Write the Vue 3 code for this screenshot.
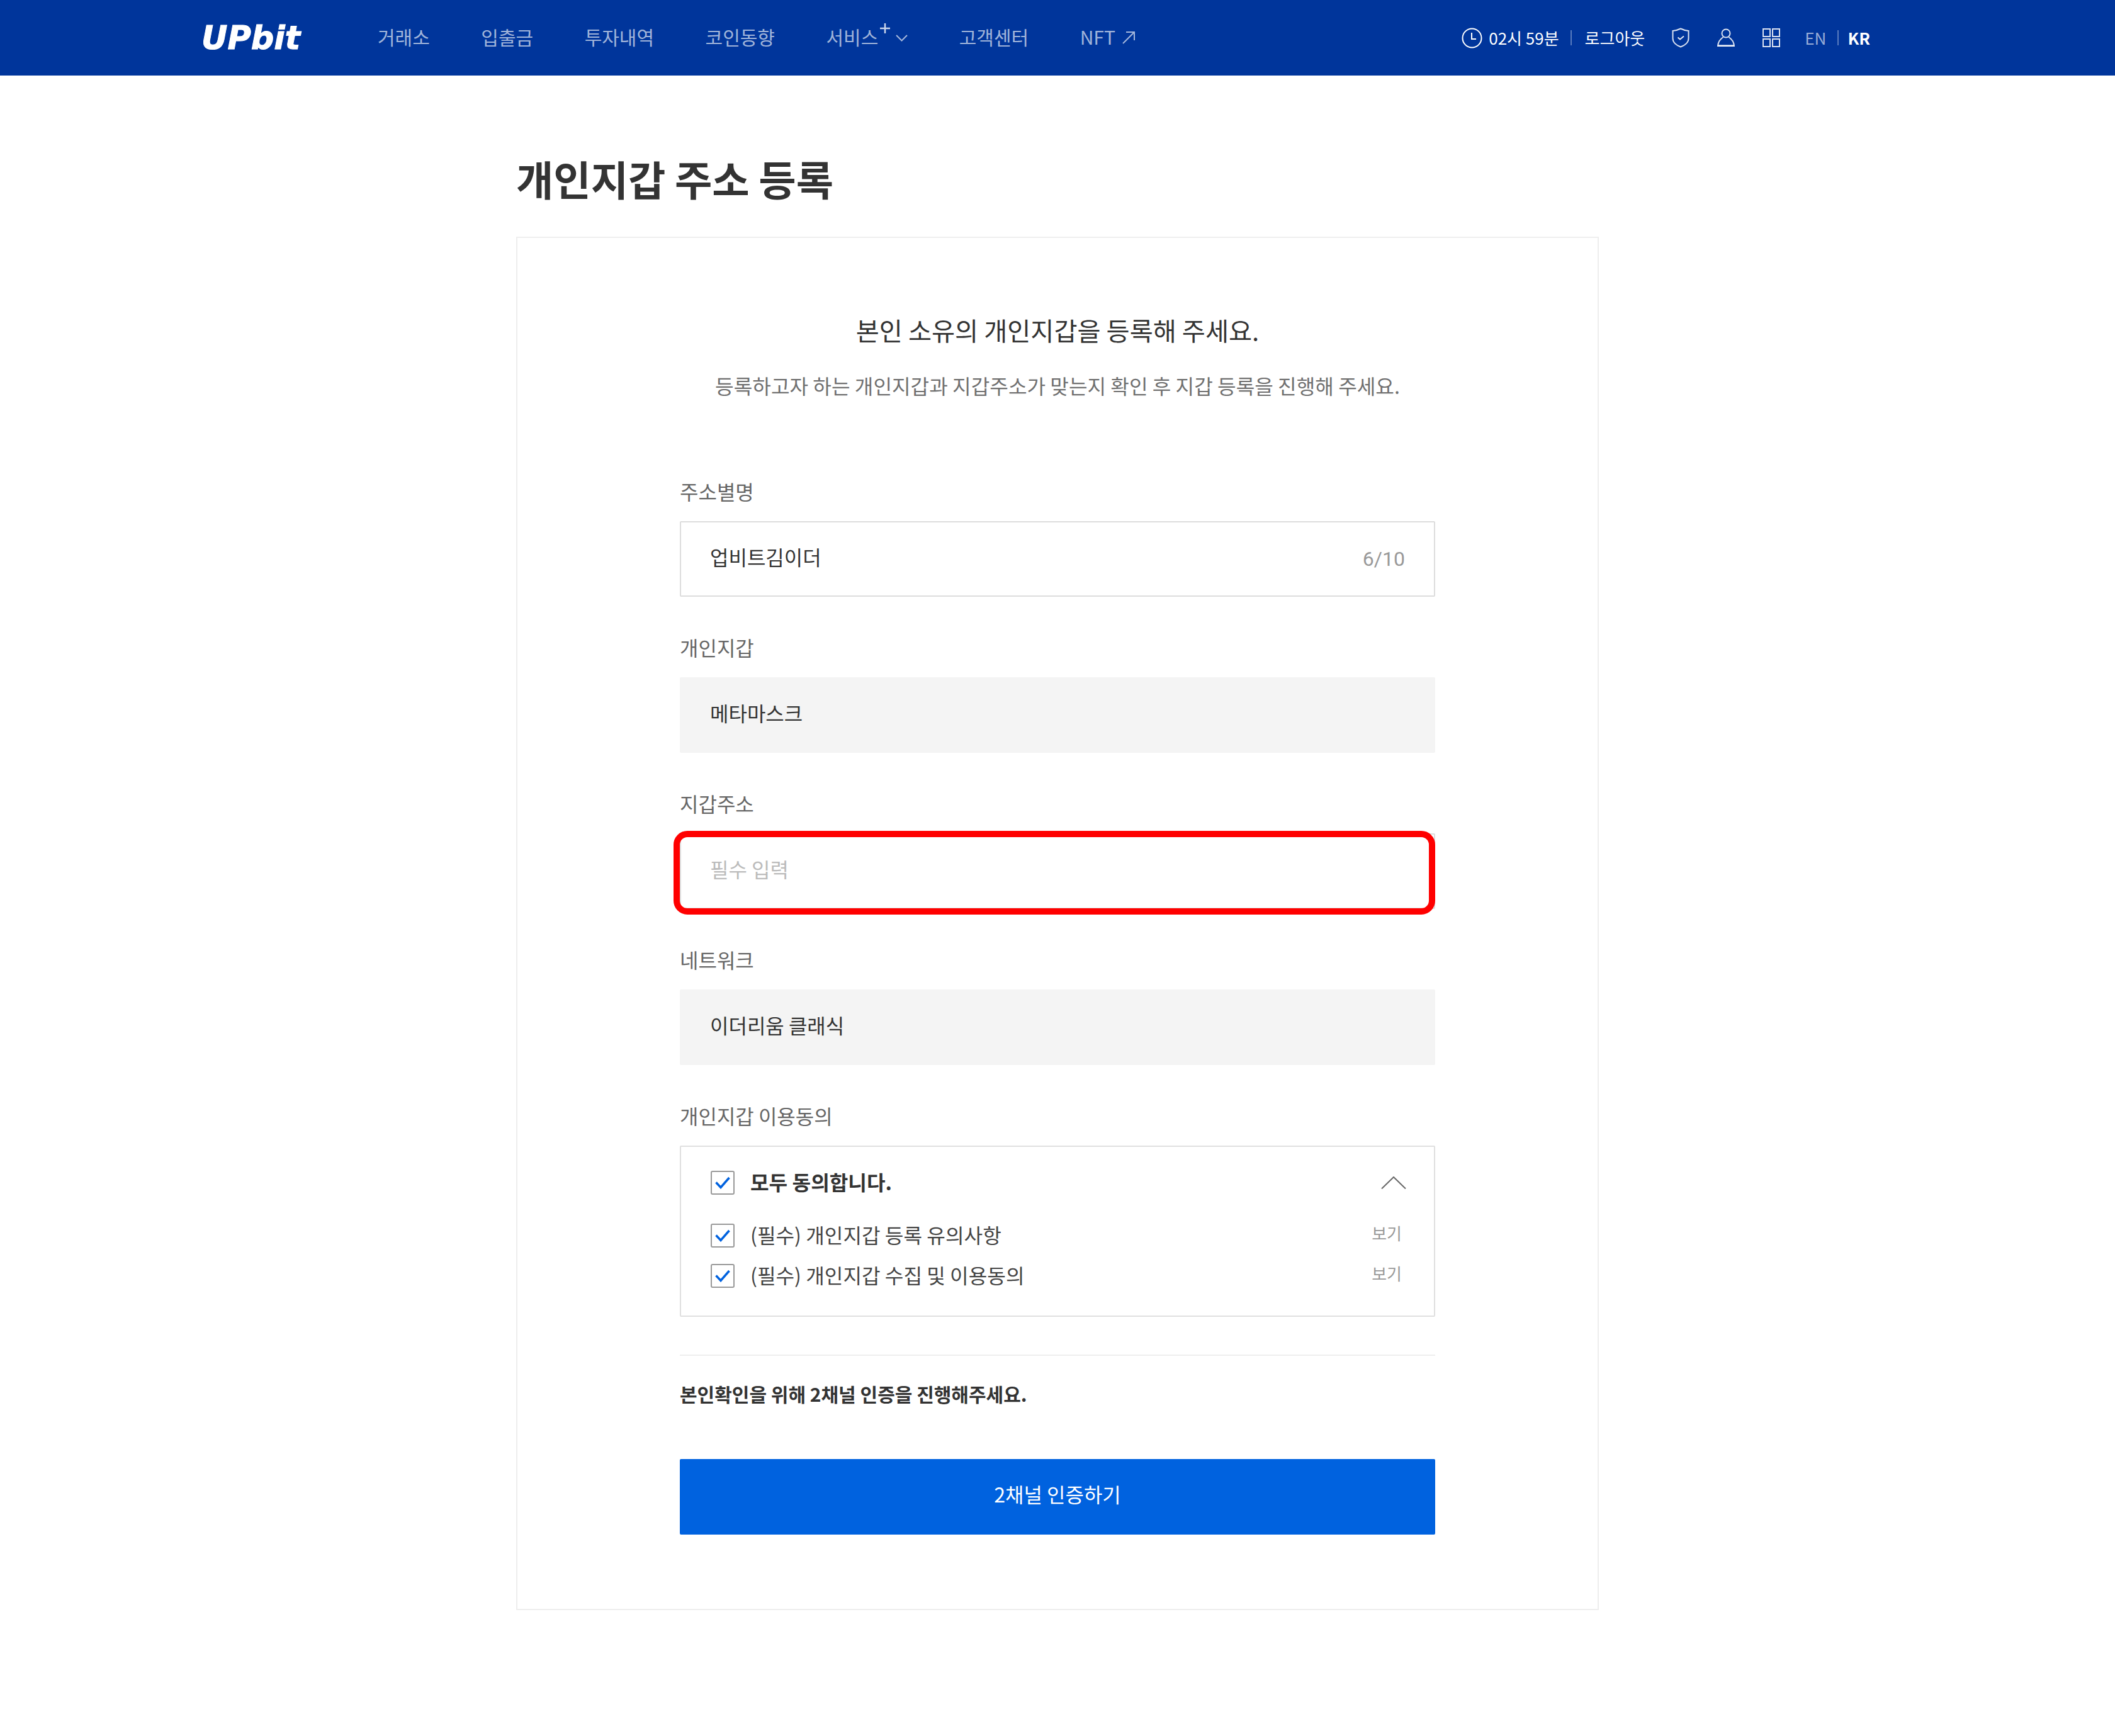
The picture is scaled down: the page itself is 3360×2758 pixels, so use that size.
<script setup>
const nav = ['거래소', '입출금', '투자내역', '코인동향']
const terms = ['(필수) 개인지갑 등록 유의사항', '(필수) 개인지갑 수집 및 이용동의']
</script>

<template>
  <div class="page">
    <header class="top">
      <span class="logo">UPbit</span>
      <nav class="nav">
        <a v-for="n in nav" :key="n">{{ n }}</a>
        <a class="svc">서비스
          <svg class="plus" viewBox="0 0 16 16" width="16" height="16"><path d="M8 0v16M0 8h16" fill="none" stroke="currentColor" stroke-width="2.500"/></svg>
          <svg class="caret" viewBox="0 0 19 11" width="19" height="11"><path d="M1 1l8.500 8.500L18 1" fill="none" stroke="currentColor" stroke-width="2"/></svg>
        </a>
        <a>고객센터</a>
        <a class="nft">NFT
          <svg viewBox="0 0 20 21" width="20" height="21"><path d="M1 20L18.500 2.500M6 2h13v13" fill="none" stroke="currentColor" stroke-width="2"/></svg>
        </a>
      </nav>
      <div class="util">
        <svg class="clock" viewBox="0 0 33 33" width="33" height="33"><circle cx="16.500" cy="16.500" r="15" fill="none" stroke="#fff" stroke-width="2"/><path d="M16 8v10h7" fill="none" stroke="#fff" stroke-width="2"/></svg>
        <span class="time">02시 59분</span>
        <i class="sep first"></i>
        <span class="logout">로그아웃</span>
        <svg class="shield" viewBox="0 0 28 32" width="28" height="32"><path d="M14 1.500C18 3.500 22 4.500 26.500 5V17C26.500 24 20 28.500 14 30.500 8 28.500 1.500 24 1.500 17V5C6 4.500 10 3.500 14 1.500Z" fill="none" stroke="#fff" stroke-opacity=".85" stroke-width="2"/><path d="M9.500 15.500l3.500 3 6-5" fill="none" stroke="#fff" stroke-opacity=".9" stroke-width="2"/></svg>
        <svg class="user" viewBox="0 0 30 30" width="30" height="30"><circle cx="15" cy="8" r="6.500" fill="none" stroke="#fff" stroke-opacity=".85" stroke-width="2"/><path d="M10.500 14C6 17 2.500 22 2 28H28C27.500 22 24 17 19.500 14" fill="none" stroke="#fff" stroke-opacity=".85" stroke-width="2"/><path d="M2 27.500H28" stroke="#fff" stroke-opacity=".6" stroke-width="3"/></svg>
        <svg class="grid" viewBox="0 0 28 30" width="28" height="30"><g fill="none" stroke="#fff" stroke-opacity=".85" stroke-width="2"><rect x="1" y="1" width="11" height="12"/><rect x="16" y="1" width="11" height="12"/><rect x="1" y="17" width="11" height="12"/><rect x="16" y="17" width="11" height="12"/></g></svg>
        <span class="en">EN</span>
        <i class="sep"></i>
        <span class="kr">KR</span>
      </div>
    </header>

    <main class="main">
      <h1 class="title">개인지갑 주소 등록</h1>
      <section class="card">
        <h2 class="lead">본인 소유의 개인지갑을 등록해 주세요.</h2>
        <p class="sub">등록하고자 하는 개인지갑과 지갑주소가 맞는지 확인 후 지갑 등록을 진행해 주세요.</p>

        <div class="form">
          <div class="field">
            <label>주소별명</label>
            <div class="box line">
              <span>업비트김이더</span>
              <span class="count">6/10</span>
            </div>
          </div>
          <div class="field">
            <label>개인지갑</label>
            <div class="box fill"><span>메타마스크</span></div>
          </div>
          <div class="field">
            <label>지갑주소</label>
            <div class="box line mark">
              <span class="ph">필수 입력</span>
              <i class="red"></i>
            </div>
          </div>
          <div class="field">
            <label>네트워크</label>
            <div class="box fill"><span>이더리움 클래식</span></div>
          </div>
          <div class="field">
            <label>개인지갑 이용동의</label>
            <div class="agree">
              <div class="row all">
                <span class="chk"><svg viewBox="0 0 24 20" width="24" height="20"><path d="M1.500 9.500l7.500 8L22.500 2" fill="none" stroke="#0062df" stroke-width="3.500"/></svg></span>
                <b>모두 동의합니다.</b>
                <svg class="up" viewBox="0 0 40 20" width="40" height="20"><path d="M1 19.500L20 1l19 18.500" fill="none" stroke="#666" stroke-width="2"/></svg>
              </div>
              <div class="row term" v-for="t in terms" :key="t">
                <span class="chk"><svg viewBox="0 0 24 20" width="24" height="20"><path d="M1.500 9.500l7.500 8L22.500 2" fill="none" stroke="#0062df" stroke-width="3.500"/></svg></span>
                <span class="tx">{{ t }}</span>
                <a class="view">보기</a>
              </div>
            </div>
          </div>
          <hr class="rule" />
          <p class="notice">본인확인을 위해 2채널 인증을 진행해주세요.</p>
          <button class="cta">2채널 인증하기</button>
        </div>
      </section>
    </main>
  </div>
</template>

<style>
html, body { margin: 0; background: #fff; }
</style>

<style scoped>
.page {
  min-height: 2758px;
  font-family: "Noto Sans CJK KR", "Noto Sans", sans-serif;
  color: #333;
  background: #fff;
}
.top {
  height: 120px;
  background: #00359b;
  display: flex;
  align-items: center;
  padding-left: 320px;
  color: #fff;
  box-sizing: border-box;
}
.logo {
  width: 280px;
  font: italic 700 51px/1 "DejaVu Sans", sans-serif;
  -webkit-text-stroke: 1px #fff;
  color: #fff;
}
.nav {
  display: flex;
  align-items: center;
  gap: 81.500px;
  font-size: 30px;
  line-height: 44px;
  margin-top: -4px;
  color: rgba(255, 255, 255, 0.65);
}
.nav a { display: flex; align-items: center; white-space: nowrap; }
.plus { margin: -26px 0 0 3px; color: rgba(255, 255, 255, 0.8); }
.caret { margin: 4px 0 0 9px; }
.nft svg { margin: 2px 0 0 11px; }
.util {
  margin-left: auto;
  margin-right: 389px;
  display: flex;
  align-items: center;
  font-size: 26px;
  line-height: 40px;
}
.clock { margin-right: 10px; }
.sep { width: 2px; height: 24px; background: rgba(255, 255, 255, 0.35); }
.sep.first { margin: 0 21px 0 18px; }
.logout { margin-right: 43px; }
.user { margin-left: 43px; }
.grid { margin: 0 39px 0 43px; }
.en { color: rgba(255, 255, 255, 0.6); }
.en + .sep { margin: 0 14px 0 18px; }
.kr { font-weight: 700; }

.main { width: 1720px; margin: 0 auto; }
.title {
  margin: 0;
  padding-top: 116px;
  height: 140px;
  font-size: 64.500px;
  line-height: 94px;
  font-weight: 700;
  color: #333;
}
.card {
  border: 2px solid #eee;
  height: 2182px;
  box-sizing: border-box;
  text-align: center;
}
.lead {
  margin: 118px 0 0;
  font-size: 40.300px;
  line-height: 56px;
  font-weight: 400;
  color: #333;
}
.sub {
  margin: 36px 0 0;
  font-size: 32.200px;
  line-height: 48px;
  color: #707070;
}
.form { width: 1200px; margin: 0 auto; text-align: left; }
.field { margin-top: 56px; }
.field:first-child { margin-top: 120px; }
.field label { display: block; font-size: 32px; line-height: 48px; color: #666; margin-bottom: 24px; }
.box {
  height: 120px;
  box-sizing: border-box;
  display: flex;
  align-items: center;
  justify-content: space-between;
  padding: 0 48px;
  font-size: 32px;
  line-height: 48px;
  border-radius: 2px;
  position: relative;
}
.box span { margin-top: -8px; }
.line { border: 2px solid #ddd; padding: 0 46px; }
.fill { background: #f4f4f4; }
.box .count { color: #999; font-family: Roboto, sans-serif; margin: 0; }
.ph { color: #bbb; }
.red {
  position: absolute;
  left: -12px;
  right: -2px;
  top: -6px;
  bottom: -11px;
  border: 10px solid #f00;
  border-radius: 22px;
}
.agree {
  border: 2px solid #e0e0e0;
  height: 272px;
  box-sizing: border-box;
  padding: 38px 48px 0 47px;
  font-size: 32.200px;
  color: #444;
  border-radius: 2px;
}
.row { display: flex; align-items: center; height: 38px; }
.all { margin-bottom: 46px; }
.term + .term { margin-top: 26px; }
.chk {
  width: 38px;
  height: 38px;
  box-sizing: border-box;
  border: 2px solid #999;
  border-radius: 3px;
  margin-right: 25px;
  display: flex;
  align-items: center;
  justify-content: center;
  flex: none;
}
.all b { font-weight: 700; color: #333; margin-bottom: 4px; }
.tx { margin-bottom: 4px; }
.up { margin: 0 -4px 0 auto; }
.view { margin: 0 3px 10px auto; font-size: 26px; color: #999; }
.rule { border: 0; height: 2px; background: #eee; margin: 60px 0 0; }
.notice { margin: 38px 0 0; font-size: 30px; line-height: 44px; font-weight: 700; color: #333; }
.cta {
  display: block;
  width: 100%;
  height: 120px;
  margin-top: 82px;
  border: 0;
  border-radius: 2px;
  background: #0062df;
  color: #fff;
  font: 400 32px/48px "Noto Sans CJK KR", sans-serif;
  padding: 0 0 10px;
}
</style>
